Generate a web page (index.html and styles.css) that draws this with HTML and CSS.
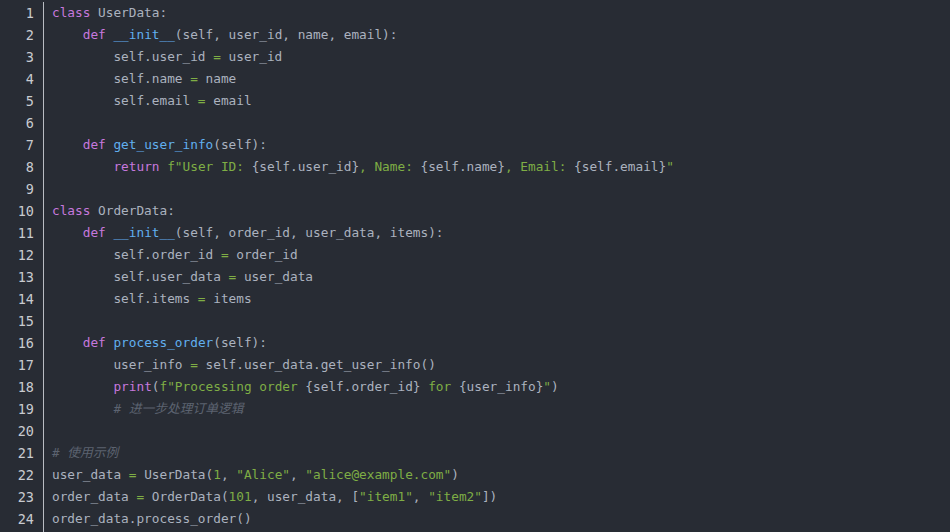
FILE: index.html
```html
<!DOCTYPE html>
<html lang="zh">
<head>
<meta charset="utf-8">
<title>code</title>
<link rel="stylesheet" href="styles.css">
</head>
<body>
<div class="editor">
<div class="gutter">
<div>1</div><div>2</div><div>3</div><div>4</div><div>5</div><div>6</div><div>7</div><div>8</div><div>9</div><div>10</div><div>11</div><div>12</div><div>13</div><div>14</div><div>15</div><div>16</div><div>17</div><div>18</div><div>19</div><div>20</div><div>21</div><div>22</div><div>23</div><div>24</div>
</div>
<div class="code">
<div class="ln"><span class="k">class</span> UserData:</div>
<div class="ln">    <span class="k">def</span> <span class="f">__init__</span>(self, user_id, name, email):</div>
<div class="ln">        self.user_id <span class="o">=</span> user_id</div>
<div class="ln">        self.name <span class="o">=</span> name</div>
<div class="ln">        self.email <span class="o">=</span> email</div>
<div class="ln"> </div>
<div class="ln">    <span class="k">def</span> <span class="f">get_user_info</span>(self):</div>
<div class="ln">        <span class="k">return</span> <span class="s">f"User ID: </span>{self.user_id}<span class="s">, Name: </span>{self.name}<span class="s">, Email: </span>{self.email}<span class="s">"</span></div>
<div class="ln"> </div>
<div class="ln"><span class="k">class</span> OrderData:</div>
<div class="ln">    <span class="k">def</span> <span class="f">__init__</span>(self, order_id, user_data, items):</div>
<div class="ln">        self.order_id <span class="o">=</span> order_id</div>
<div class="ln">        self.user_data <span class="o">=</span> user_data</div>
<div class="ln">        self.items <span class="o">=</span> items</div>
<div class="ln"> </div>
<div class="ln">    <span class="k">def</span> <span class="f">process_order</span>(self):</div>
<div class="ln">        user_info <span class="o">=</span> self.user_data.get_user_info()</div>
<div class="ln">        <span class="k">print</span>(<span class="s">f"Processing order </span>{self.order_id}<span class="s"> for </span>{user_info}<span class="s">"</span>)</div>
<div class="ln">        <span class="c"># 进一步处理订单逻辑</span></div>
<div class="ln"> </div>
<div class="ln"><span class="c"># 使用示例</span></div>
<div class="ln">user_data <span class="o">=</span> UserData(<span class="n">1</span>, <span class="s">"Alice"</span>, <span class="s">"alice@example.com"</span>)</div>
<div class="ln">order_data <span class="o">=</span> OrderData(<span class="n">101</span>, user_data, [<span class="s">"item1"</span>, <span class="s">"item2"</span>])</div>
<div class="ln">order_data.process_order()</div>
</div>
</div>
</body>
</html>
```
FILE: styles.css
```css
html, body {
  margin: 0;
  padding: 0;
  background: #282c34;
  height: 100%;
  overflow: hidden;
}
.editor {
  display: flex;
  padding-top: 2px;
  background: #282c34;
  height: 100%;
}
.gutter {
  width: 34px;
  padding-right: 9px;
  border-right: 1px solid #b9bcc2;
  text-align: right;
  color: #c8cbd0;
  font-family: "DejaVu Sans Mono", monospace;
  font-size: 13.5px;
  line-height: 22px;
}
.code {
  padding-left: 8px;
  color: #abb2bf;
  font-family: "DejaVu Sans Mono", "Noto Sans CJK SC", monospace;
  font-size: 12.75px;
  line-height: 22px;
}
.ln {
  white-space: pre;
  height: 22px;
}
.k { color: #c678dd; }
.f { color: #61afef; }
.s { color: #7fae45; }
.n { color: #7fae45; }
.o { color: #7fae45; }
.c { color: #5c6370; font-style: italic; }
```
